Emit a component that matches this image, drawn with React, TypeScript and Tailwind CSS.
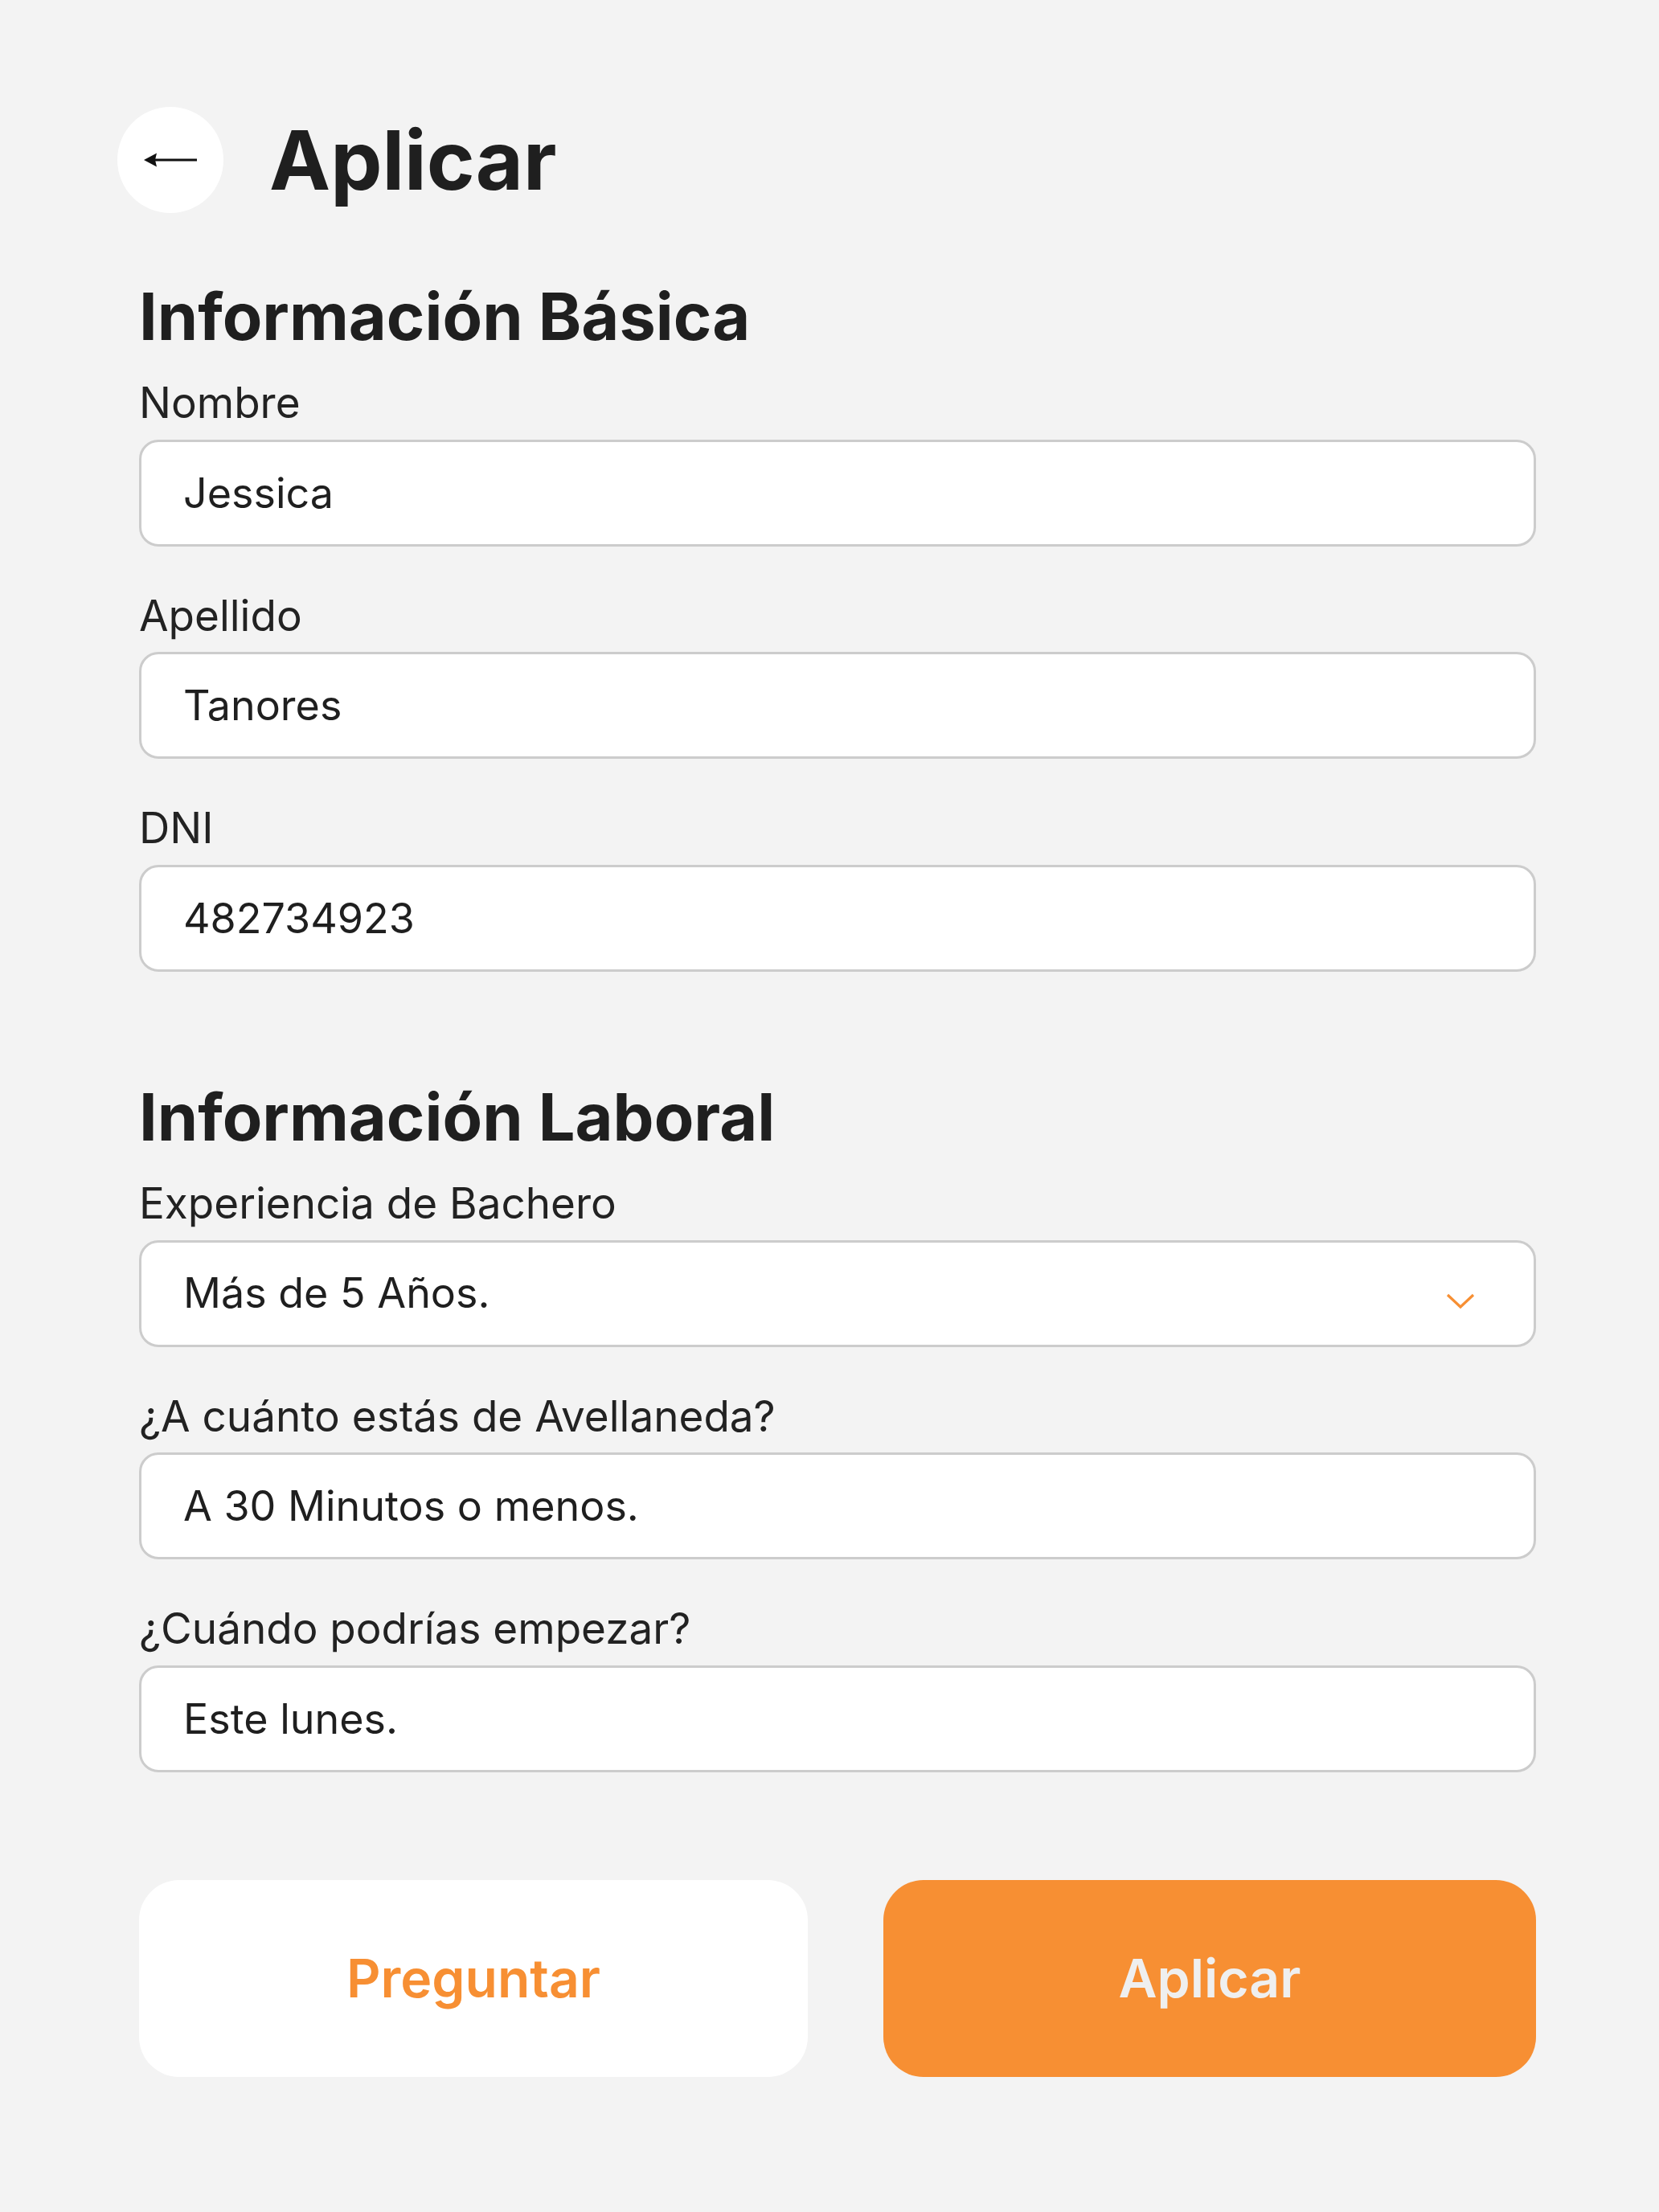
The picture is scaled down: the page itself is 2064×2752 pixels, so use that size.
import React from 'react';

const font = { fontFamily: 'Inter, "Noto Sans", sans-serif' };

function Field({ label, value, className = '' }: { label: string; value: string; className?: string }) {
  return (
    <div className={className}>
      <label className="block text-[53px] leading-[1.2] text-[#222222]">{label}</label>
      <input
        readOnly
        defaultValue={value}
        className="mt-[13px] block h-[133px] w-full rounded-[24px] border-[3px] border-[#cccccc] bg-white pl-[52px] text-[52px] text-[#1f1f1f] outline-none"
      />
    </div>
  );
}

function SelectField({ label, value, className = '' }: { label: string; value: string; className?: string }) {
  return (
    <div className={className}>
      <label className="block text-[53px] leading-[1.2] text-[#222222]">{label}</label>
      <div className="mt-[13px] flex h-[133px] w-full items-center justify-between rounded-[24px] border-[3px] border-[#cccccc] bg-white pl-[52px] pr-[73px]">
        <span className="text-[52px] text-[#1f1f1f]">{value}</span>
        <svg width="36" height="20" viewBox="0 0 36 20" className="mt-[20px]">
          <path d="M2 2 L18 17 L34 2" fill="none" stroke="#f78f33" strokeWidth="3.2" />
        </svg>
      </div>
    </div>
  );
}

export default function App() {
  return (
    <div className="min-h-screen w-full bg-[#f3f3f3] pt-[133px] pb-[160px]" style={font}>
      {/* header */}
      <div className="ml-[146px] flex items-center gap-[57px]">
        <button className="flex h-[132px] w-[132px] items-center justify-center rounded-full bg-white">
          <svg width="66" height="18" viewBox="0 0 66 18">
            <path d="M0 9 L16 0.5 L14 9 L16 17.5 Z" fill="#111111" />
            <line x1="12" y1="9" x2="66" y2="9" stroke="#111111" strokeWidth="3" />
          </svg>
        </button>
        <h1 className="text-[102px] font-bold leading-[1.2] text-[#1f1f1f]">Aplicar</h1>
      </div>

      <div className="ml-[173px] w-[1738px]">
        <h2 className="mt-[81px] text-[81px] font-bold leading-[1.2] text-[#1f1f1f]">Información Básica</h2>
        <Field className="mt-[27px]" label="Nombre" value="Jessica" />
        <Field className="mt-[55px]" label="Apellido" value="Tanores" />
        <Field className="mt-[55px]" label="DNI" value="482734923" />

        <h2 className="mt-[133px] text-[81px] font-bold leading-[1.2] text-[#1f1f1f]">Información Laboral</h2>
        <SelectField className="mt-[27px]" label="Experiencia de Bachero" value="Más de 5 Años." />
        <Field className="mt-[55px]" label="¿A cuánto estás de Avellaneda?" value="A 30 Minutos o menos." />
        <Field className="mt-[55px]" label="¿Cuándo podrías empezar?" value="Este lunes." />

        <div className="mt-[134px] flex gap-[94px]">
          <button className="h-[245px] w-[832px] rounded-[50px] bg-white text-[66px] font-semibold text-[#f78f33]">
            Preguntar
          </button>
          <button className="h-[245px] flex-1 rounded-[50px] bg-[#f78f33] text-[66px] font-semibold text-[#efefef]">
            Aplicar
          </button>
        </div>
      </div>
    </div>
  );
}
